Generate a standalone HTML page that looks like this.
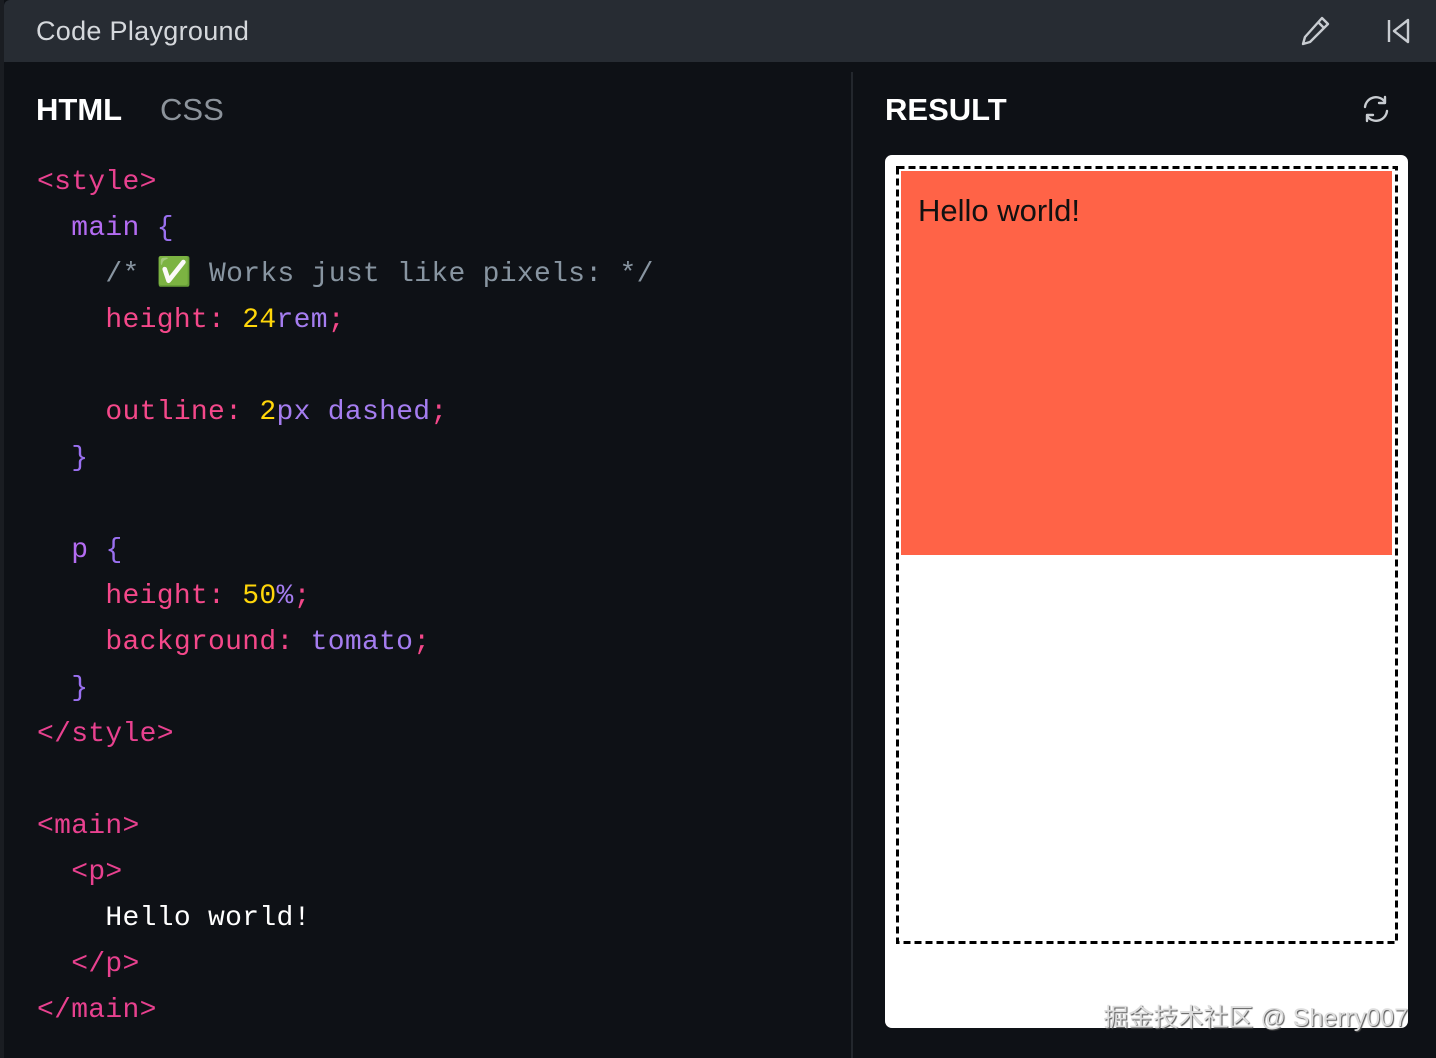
<!DOCTYPE html>
<html><head><meta charset="utf-8"><style>
*{margin:0;padding:0;box-sizing:border-box}
body{width:1436px;height:1058px;background:#0e1116;position:relative;overflow:hidden;font-family:"Liberation Sans",sans-serif}
.edge{position:absolute;left:0;top:0;width:4px;height:1058px;background:#1a1d22}
.hdr{position:absolute;left:4px;top:0;width:1432px;height:62px;background:#272c33;border-top-left-radius:6px}
.hdr .t{position:absolute;left:32px;top:16px;font-size:27px;color:#d5d8dc;letter-spacing:0.3px}
.tab{position:absolute;top:92px;font-size:31px;font-weight:bold;color:#fff}
.div{position:absolute;left:851px;top:72px;width:2px;height:986px;background:#23272d}
.code{position:absolute;left:37px;top:160px;font-family:"Liberation Mono",monospace;font-size:28px;line-height:46px;white-space:pre;color:#fff;letter-spacing:0.3px}
.g{color:#e8418f}.m{color:#b46cf2}.b{color:#9a70f0}.c{color:#8895a1}.p{color:#f4488a}.n{color:#ffd60a}.v{color:#a57df0}
.box{position:absolute;left:885px;top:155px;width:523px;height:873px;background:#fff;border-radius:7px}
.tom{position:absolute;left:901px;top:171px;width:491px;height:384px;background:#ff6347}
.tom span{position:absolute;left:17px;top:22px;font-size:31px;color:#111}
.wm{position:absolute;right:28px;top:998px;font-family:"Liberation Sans","Noto Sans CJK SC",sans-serif;font-size:25px;color:#ddd;text-shadow:1px 1px 1px #555}
</style></head><body>
<div class="edge"></div>
<div class="hdr"><span class="t">Code Playground</span>
<svg style="position:absolute;left:1294px;top:14px" width="34" height="34" viewBox="0 0 34 34" fill="none" stroke="#c8ccd1" stroke-width="2.4" stroke-linejoin="round"><path d="M24 4l6 6L12 28l-7 2 2-7z M20 8l6 6"/></svg>
<svg style="position:absolute;left:1378px;top:16px" width="30" height="30" viewBox="0 0 30 30" fill="none" stroke="#c8ccd1" stroke-width="2.4" stroke-linejoin="round"><path d="M7 4v22 M26 4L12 15l14 11z"/></svg>
</div>
<div class="tab" style="left:36px">HTML</div>
<div class="tab" style="left:160px;font-weight:normal;color:#8c939b">CSS</div>
<div class="div"></div>
<div class="tab" style="left:885px">RESULT</div>
<svg style="position:absolute;left:1360px;top:93px" width="32" height="32" viewBox="0 0 32 32" fill="none" stroke="#c8ccd1" stroke-width="2.4" stroke-linecap="round" stroke-linejoin="round"><path d="M5 14a11 11 0 0 1 20-5 M25 4v6h-6 M27 18a11 11 0 0 1-20 5 M7 28v-6h6"/></svg>
<div class="code"><span class="g">&lt;style&gt;</span>
  <span class="m">main</span> <span class="b">{</span>
    <span class="c">/* <span style="color:#2fc14a">✅</span> Works just like pixels: */</span>
    <span class="p">height:</span> <span class="n">24</span><span class="v">rem</span><span class="p">;</span>

    <span class="p">outline:</span> <span class="n">2</span><span class="v">px dashed</span><span class="p">;</span>
  <span class="b">}</span>

  <span class="m">p</span> <span class="b">{</span>
    <span class="p">height:</span> <span class="n">50</span><span class="v">%</span><span class="p">;</span>
    <span class="p">background:</span> <span class="v">tomato</span><span class="p">;</span>
  <span class="b">}</span>
<span class="g">&lt;/style&gt;</span>

<span class="g">&lt;main&gt;</span>
  <span class="g">&lt;p&gt;</span>
    Hello world!
  <span class="g">&lt;/p&gt;</span>
<span class="g">&lt;/main&gt;</span></div>
<div class="box"></div>
<svg style="position:absolute;left:896px;top:166px" width="502" height="778"><rect x="1.5" y="1.5" width="499" height="775" fill="none" stroke="#000" stroke-width="3" stroke-dasharray="7 4"/></svg>
<div class="tom"><span>Hello world!</span></div>
<div class="wm">掘金技术社区 @ Sherry007</div>
</body></html>
